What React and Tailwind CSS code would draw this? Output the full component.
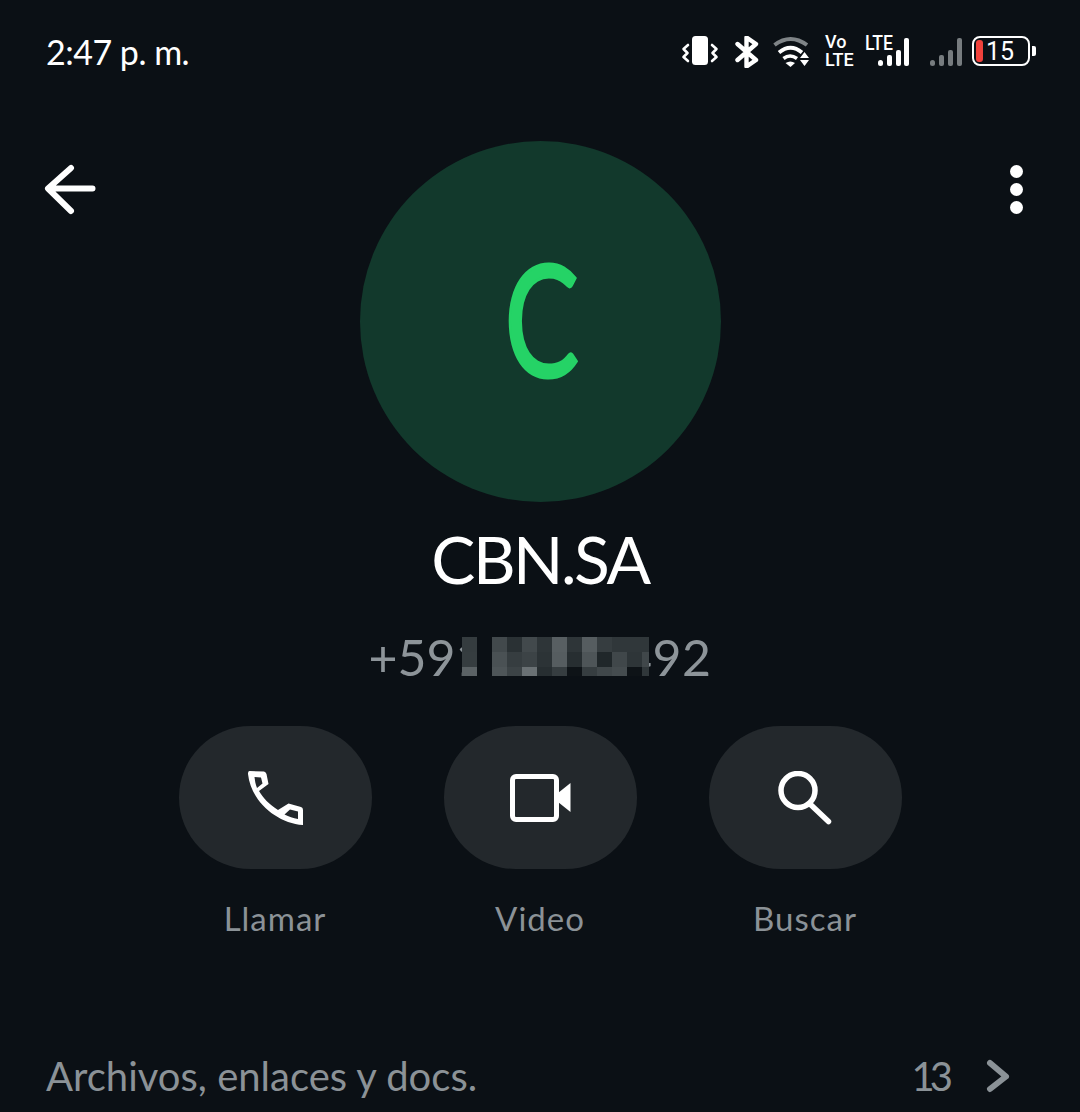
const hand = "font-['Lato','Noto_Sans',sans-serif]";

// pixelated block over the phone number, read off the screenshot
const mosaic = [
  "bg-[#353c3f]", "", "bg-[#42494c]", "bg-[#2a3134]", "bg-[#42494c]", "bg-[#2e3538]", "bg-[#585f62]", "bg-[#2e3538]", "bg-[#565d60]", "bg-[#363d40]", "bg-[#30373a]", "bg-[#30373a]", "bg-[#30373a]",
  "bg-[#363d40]", "", "bg-[#4a5154]", "bg-[#363d40]", "bg-[#3c4346]", "bg-[#2c3336]", "bg-[#565d60]", "bg-[#272e31]", "bg-[#4e5558]", "bg-[#20272a]", "bg-[#40474a]", "bg-[#2e3538]", "bg-[#40474a]",
  "bg-[#5b6265]", "", "bg-[#4e5558]", "bg-[#3c4346]", "bg-[#6a7174]", "bg-[#272e31]", "bg-[#363d40]", "bg-[#0e1317]", "bg-[#363d40]", "bg-[#40474a]", "bg-[#454c4f]", "bg-[#0e1317]", "bg-[#30373a]",
];

function StatusIcons() {
  return (
    <div className="flex items-start h-[32px]">
      {/* vibrate */}
      <svg width="38" height="32" viewBox="0 0 38 32" fill="none">
        <rect x="11" y="0" width="16" height="29" rx="3.5" fill="#fff" />
        <path d="M7 9 L2.5 13 L6.5 17 L2.5 21 L7 25" stroke="#fff" strokeWidth="2.6" strokeLinecap="round" strokeLinejoin="round" />
        <path d="M31 9 L35.5 13 L31.5 17 L35.5 21 L31 25" stroke="#fff" strokeWidth="2.6" strokeLinecap="round" strokeLinejoin="round" />
      </svg>
      {/* bluetooth */}
      <svg className="ml-[16px]" width="24" height="32" viewBox="0 0 24 32" fill="none">
        <path d="M2.5 8 L21 24 L11.5 30.5 V1.5 L21 8 L2.5 24" stroke="#fff" strokeWidth="4.4" strokeLinecap="round" strokeLinejoin="round" />
      </svg>
      {/* wifi */}
      <svg className="ml-[14px]" width="38" height="32" viewBox="0 0 38 32" fill="none">
        <path d="M1.5 9 Q17.5 -3 34 9" stroke="#7f8487" strokeWidth="4" />
        <path d="M6 16.5 Q17.5 7 29 16.5" stroke="#fff" strokeWidth="3.8" />
        <path d="M10.5 22.5 Q17 17.5 24 22.5" stroke="#fff" strokeWidth="3.6" />
        <path d="M12.5 27 Q17.5 24 22 27 L17.5 31 Z" fill="#fff" />
        <path d="M27 22 L31.5 16 L36 22 Z M27 24 L36 24 L31.5 30 Z" fill="#fff" />
      </svg>
      {/* VoLTE */}
      <div className="ml-[14px] -mt-[3px] w-[30px] flex flex-col font-['Roboto',sans-serif] font-medium text-white text-[18px] leading-[18px]">
        <span>Vo</span>
        <span>LTE</span>
      </div>
      {/* LTE signal */}
      <svg className="ml-[10px] -mt-[6px]" width="46" height="38" viewBox="0 -6 46 38" fill="#fff">
        <text x="0" y="14" fontFamily="Roboto, sans-serif" fontWeight="500" fontSize="20" textLength="28" lengthAdjust="spacingAndGlyphs">LTE</text>
        <rect x="13" y="24" width="5" height="6" rx="2.5" />
        <rect x="22" y="19" width="5" height="11" rx="2" />
        <rect x="31" y="14" width="5" height="16" rx="2" />
        <rect x="39" y="2" width="5" height="28" rx="2" />
      </svg>
      {/* second sim */}
      <svg className="ml-[19px]" width="32" height="32" viewBox="0 0 32 32" fill="#777c7f">
        <rect x="0" y="24" width="5" height="6" rx="2.5" />
        <rect x="9" y="19" width="5" height="11" rx="2" />
        <rect x="18" y="14" width="5" height="16" rx="2" />
        <rect x="27" y="2" width="5" height="28" rx="2" />
      </svg>
      {/* battery */}
      <div className="ml-[10px] flex items-center h-[30px]">
        <div className="w-[58px] h-[30px] rounded-[8px] border-[2.5px] border-white flex items-center pl-[2px]">
          <div className="w-[7px] h-[22px] rounded-[3px] bg-[#f0423c]" />
          <span className="ml-[3px] font-['Roboto',sans-serif] text-white text-[25px] leading-none">15</span>
        </div>
        <div className="ml-[2px] w-[4px] h-[10px] rounded-r-[2px] bg-white" />
      </div>
    </div>
  );
}

function PhoneIcon() {
  return (
    <svg width="57" height="56" viewBox="11 10 57 56">
      <path
        fill="#fff"
        fillRule="evenodd"
        d="M13.5 11 L28 11.5 Q30 12 30.5 14 L32.5 24 L23 31 C27 38 33 44 42 50 L52.5 43.5 L65 47 Q67 47.5 67 50 L67 65 C40 63 15 41 12 14 Q12 11 13.5 11 Z M18.5 17 L25 17.5 L26.5 23.5 L21 28 C19.5 24.5 19 21 18.5 17 Z M48.5 54.5 L54 49.5 L62 51.5 L62 59 C57 58 53 56.5 48.5 54.5 Z"
      />
    </svg>
  );
}

function VideoIcon() {
  return (
    <svg width="61" height="48" viewBox="0 0 61 48" fill="none">
      <rect x="2.5" y="2.5" width="44" height="43" rx="3.5" stroke="#fff" strokeWidth="5" />
      <path d="M48 19 L60.5 9 V38 L48 28 Z" fill="#fff" />
    </svg>
  );
}

function SearchIcon() {
  return (
    <svg width="54" height="54" viewBox="0 0 54 54" fill="none">
      <circle cx="20" cy="19.5" r="17" stroke="#fff" strokeWidth="5.5" />
      <path d="M32 33 L50.5 50.5" stroke="#fff" strokeWidth="5.5" strokeLinecap="round" />
    </svg>
  );
}

function Action({ icon, label }) {
  return (
    <div className="flex flex-col items-center w-[193px]">
      <div className="w-[193px] h-[143px] rounded-[72px] bg-[#23282c] flex items-center justify-center">{icon}</div>
      <div className="mt-[29px] h-[40px] leading-[40px] text-[33px] tracking-[1px] text-[#8b9297]">{label}</div>
    </div>
  );
}

export default function App() {
  return (
    <div className={`w-[1080px] h-[1112px] overflow-hidden bg-[#0b1015] ${hand}`}>
      {/* Status bar */}
      <div className="h-[68px] pt-[36px] pl-[46px] pr-[44px] flex justify-between">
        <div className="text-white text-[34px] leading-[32px] tracking-[-0.5px]">2:47 p. m.</div>
        <StatusIcons />
      </div>

      {/* Header + avatar */}
      <div className="mt-[73px] grid grid-cols-[1fr_361px_1fr]">
        <div className="pl-[44px] pt-[22px]">
          <svg width="52" height="52" viewBox="0 0 52 52" fill="none">
            <path d="M27 5 L4 25.5 L27 48 M4.5 25.5 H48.5" stroke="#fff" strokeWidth="6" strokeLinecap="round" strokeLinejoin="round" />
          </svg>
        </div>
        <div className="w-[361px] h-[361px] rounded-full bg-[#12392c] flex items-center justify-center pb-[8px] pl-[4px]">
          <span className="text-[#25d366] text-[155px] leading-none scale-x-[0.72] [-webkit-text-stroke:3px_#25d366] [stroke-linejoin:round]">C</span>
        </div>
        <div className="pr-[57px] pt-[24px] flex justify-end">
          <div className="flex flex-col gap-[5px]">
            <div className="w-[13px] h-[13px] rounded-full bg-white" />
            <div className="w-[13px] h-[13px] rounded-full bg-white" />
            <div className="w-[13px] h-[13px] rounded-full bg-white" />
          </div>
        </div>
      </div>

      {/* Name + number */}
      <div className="mt-[25px] h-[64px] leading-[64px] text-center text-white text-[66px] tracking-[-2.5px]">CBN.SA</div>
      <div className="mt-[41px] mx-auto w-[343px] h-[50px] relative flex justify-between text-[#8d9499] text-[50px] leading-[50px]">
        <span>+591</span>
        <span className="tracking-[0.5px]">492</span>
        <div className="absolute left-[93px] top-[5px] grid grid-cols-[repeat(12,15px)_7px] grid-rows-[15px_15px_9px]">
          {mosaic.map((c, i) => (
            <div key={i} className={c || "bg-[#0b1015]"} />
          ))}
        </div>
      </div>

      {/* Actions */}
      <div className="mt-[44px] flex justify-center gap-[72px]">
        <Action icon={<PhoneIcon />} label="Llamar" />
        <Action icon={<VideoIcon />} label="Video" />
        <Action icon={<SearchIcon />} label="Buscar" />
      </div>

      {/* Media row */}
      <div className="mt-[108px] h-[60px] pl-[46px] pr-[70px] flex items-center justify-between text-[#8b9297] text-[40px]">
        <span>Archivos, enlaces y docs.</span>
        <div className="flex items-center gap-[38px]">
          <span className="tracking-[-5px]">13</span>
          <svg width="24" height="34" viewBox="0 0 24 34" fill="none">
            <path d="M4 4 L20 17.5 L4 30" stroke="#8b9297" strokeWidth="6" strokeLinecap="round" strokeLinejoin="round" />
          </svg>
        </div>
      </div>
    </div>
  );
}
